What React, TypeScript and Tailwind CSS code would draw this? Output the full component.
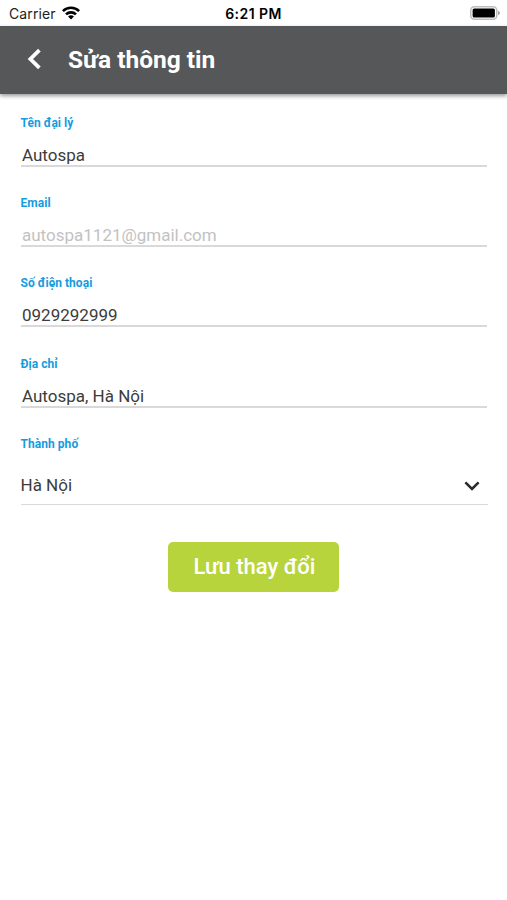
import type { ReactNode } from "react";

type FieldItem = { label: string; value: string; disabled?: boolean };

const fields: FieldItem[] = [
  { label: "Tên đại lý", value: "Autospa" },
  { label: "Email", value: "autospa1121@gmail.com", disabled: true },
  { label: "Số điện thoại", value: "0929292999" },
  { label: "Địa chỉ", value: "Autospa, Hà Nội" },
];

function WifiIcon() {
  return (
    <svg className="mb-[2px] h-[14px] w-[18px]" viewBox="0 0 18 14" fill="none" stroke="#000" strokeWidth={2.6}>
      <path d="M0.9 5.1a11.5 11.5 0 0 1 16.2 0" />
      <path d="M4 8.4a7.1 7.1 0 0 1 10 0" />
      <path d="M9 13.6 6.1 10.6a4 4 0 0 1 5.8 0Z" fill="#000" stroke="none" />
    </svg>
  );
}

function BatteryIcon() {
  return (
    <svg className="mb-[2px] h-[14px] w-[31px]" viewBox="0 0 31 14">
      <rect x="0.75" y="0.75" width="26" height="12.5" rx="3.5" fill="#fff" stroke="#bdbdbd" strokeWidth={1.5} />
      <rect x="2.6" y="2.4" width="22.3" height="9.2" rx="1.6" fill="#000" />
      <path d="M28 4.8c1.3.5 2 1.2 2 2.2s-.7 1.7-2 2.2Z" fill="#aaa" />
    </svg>
  );
}

function StatusBar() {
  return (
    <div className="grid h-[25.5px] grid-cols-[1fr_auto_1fr] items-center pl-[9px] pr-[6px] pt-[2px] font-['Inter',sans-serif] text-[14px] text-[#222]">
      <div className="flex items-center gap-[6px]">
        <span className="tracking-[0.1px]">Carrier</span>
        <WifiIcon />
      </div>
      <span className="-ml-[3px] text-center text-[14px] font-semibold tracking-[0.45px] text-black">6:21 PM</span>
      <div className="flex justify-end">
        <BatteryIcon />
      </div>
    </div>
  );
}

function Label({ children }: { children: ReactNode }) {
  return <span className="-ml-[0.5px] block h-4 text-[12px] font-bold leading-4 tracking-[0.05px] text-[#159cde]">{children}</span>;
}

function Field({ label, value, disabled }: FieldItem) {
  return (
    <div className="h-[80.2px]">
      <Label>{label}</Label>
      <div
        className={`mt-[14px] h-[22px] border-b-2 border-[#d9d9d9] pl-px text-[17px] leading-[20.6px] ${
          disabled ? "text-[#c2c2c2]" : "text-[#3c3c3c]"
        }`}
      >
        {value}
      </div>
    </div>
  );
}

export default function App() {
  return (
    <div className="min-h-screen bg-white font-['Roboto',sans-serif]">
      <StatusBar />
      <header className="flex h-[68.5px] items-center bg-[#565759] pl-[27px] text-white shadow-[0_2px_4px_rgba(0,0,0,0.4)]">
        <svg className="mb-px h-[22px] w-[14px]" viewBox="0 0 14 22" fill="none" stroke="#fff" strokeWidth={3.8}>
          <path d="M12.4 2.2 3.4 11l9 8.8" />
        </svg>
        <h1 className="ml-[27px] text-[24.5px] font-bold leading-8">Sửa thông tin</h1>
      </header>

      <main className="pl-[21px] pr-5 pt-[21px]">
        {fields.map((f) => (
          <Field key={f.label} {...f} />
        ))}
        <Label>Thành phố</Label>
        <div className="-mr-px flex h-[53px] items-center justify-between border-b border-[#dadada] pr-2 pt-[16px] text-[17px] text-[#3c3c3c]">
          <span className="-ml-[0.5px] pb-px">Hà Nội</span>
          <svg className="h-[10px] w-[16px]" viewBox="0 0 16 10" fill="none" stroke="#2b2b2b" strokeWidth={2.6}>
            <path d="m1.4 1.4 6.6 6.6 6.6-6.6" />
          </svg>
        </div>
        <div className="-ml-px flex justify-center pt-[37px]">
          <button className="h-[50px] w-[171px] rounded-[5px] bg-[#b8d43c] pl-[2px] text-[22px] font-medium text-white">
            Lưu thay đổi
          </button>
        </div>
      </main>
    </div>
  );
}
